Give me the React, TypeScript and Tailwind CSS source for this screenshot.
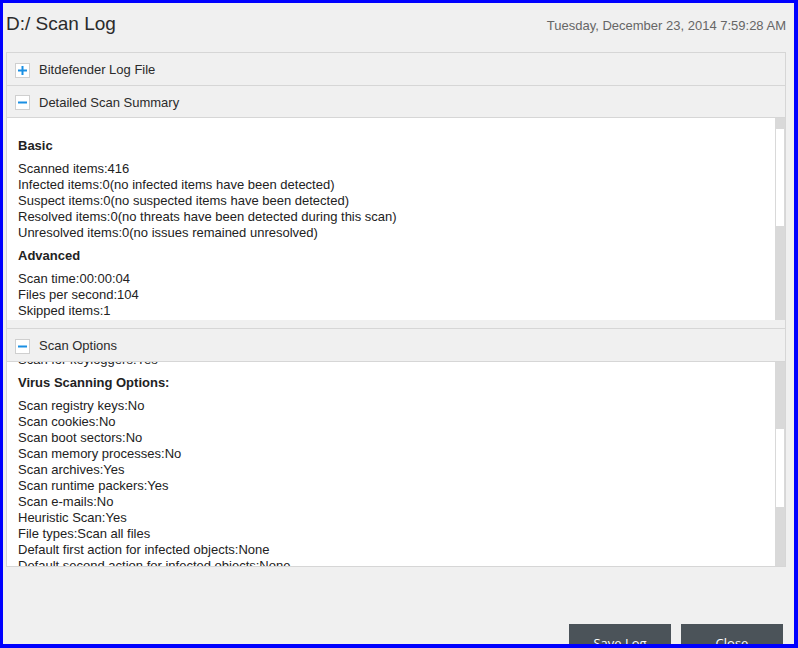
import type { ReactNode } from 'react';

const summaryBasic = [
  'Scanned items:416',
  'Infected items:0(no infected items have been detected)',
  'Suspect items:0(no suspected items have been detected)',
  'Resolved items:0(no threats have been detected during this scan)',
  'Unresolved items:0(no issues remained unresolved)',
];

const summaryAdvanced = ['Scan time:00:00:04', 'Files per second:104', 'Skipped items:1'];

const virusOptions = [
  'Scan registry keys:No',
  'Scan cookies:No',
  'Scan boot sectors:No',
  'Scan memory processes:No',
  'Scan archives:Yes',
  'Scan runtime packers:Yes',
  'Scan e-mails:No',
  'Heuristic Scan:Yes',
  'File types:Scan all files',
  'Default first action for infected objects:None',
  'Default second action for infected objects:None',
  'Default first action for suspect objects:None',
  'Default second action for suspect objects:None',
];

function ToggleBox({ open }: { open: boolean }) {
  return (
    <span className="flex h-[15px] w-[15px] shrink-0 items-center justify-center border border-[#cfcfcf] bg-white">
      <svg width="9" height="9" viewBox="0 0 9 9">
        <rect x="0" y="3.5" width="9" height="2" fill="#1a8fe3" />
        {!open && <rect x="3.5" y="0" width="2" height="9" fill="#1a8fe3" />}
      </svg>
    </span>
  );
}

function SectionHeader({ title, open, className }: { title: string; open: boolean; className: string }) {
  return (
    <div className={`flex items-center pt-[2px] pl-[8px] text-[13px] text-[#2b2b2b] ${className}`}>
      <ToggleBox open={open} />
      <span className="ml-[9px]">{title}</span>
    </div>
  );
}

function Scrollbar({ offset, thumb }: { offset: string; thumb: string }) {
  return (
    <div className={`w-[10px] shrink-0 bg-[#d9d9d9] px-[1px] ${offset}`}>
      <div className={`w-full bg-white ${thumb}`} />
    </div>
  );
}

function Heading({ children }: { children: ReactNode }) {
  return <div className="my-[7px] font-bold leading-4">{children}</div>;
}

export default function App() {
  return (
    <div className="flex h-[648px] w-[798px] flex-col overflow-hidden border-t-[3px] border-r-4 border-b-4 border-l-[3px] border-[#0000ff] bg-[#f0f0f0] font-['Liberation_Sans',Arial,sans-serif]">
      {/* Title bar */}
      <div className="flex h-[49px] shrink-0 items-baseline justify-between pt-[11px] pr-[8px] pl-[3px]">
        <h1 className="text-[19px] leading-[20px] text-[#2b2b2b]">D:/ Scan Log</h1>
        <span className="text-[13px] leading-4 text-[#666]">Tuesday, December 23, 2014 7:59:28 AM</span>
      </div>

      {/* Log panel */}
      <div className="mr-[8px] ml-[3px] flex shrink-0 flex-col border border-[#d6d6d6]">
        <SectionHeader title="Bitdefender Log File" open={false} className="h-[33px] border-b border-[#d6d6d6]" />
        <SectionHeader title="Detailed Scan Summary" open className="h-[32px] border-b border-[#d6d6d6]" />

        <div className="flex h-[202px]">
          <div className="flex-1 overflow-hidden bg-white pt-[13px] pl-[11px] text-[13px] leading-4 text-[#222]">
            <Heading>Basic</Heading>
            {summaryBasic.map((line) => (
              <div key={line}>{line}</div>
            ))}
            <Heading>Advanced</Heading>
            {summaryAdvanced.map((line) => (
              <div key={line}>{line}</div>
            ))}
          </div>
          <Scrollbar offset="pt-[11px]" thumb="h-[97px]" />
        </div>

        <div className="h-[8px]" />

        <SectionHeader title="Scan Options" open className="h-[34px] border-y border-[#d6d6d6]" />

        <div className="flex h-[204px]">
          <div className="flex-1 overflow-hidden bg-white pl-[11px] text-[13px] leading-4 text-[#222]">
            <div className="-mt-[10px]">
              <div>Scan for keyloggers:Yes</div>
              <Heading>Virus Scanning Options:</Heading>
              {virusOptions.map((line) => (
                <div key={line}>{line}</div>
              ))}
            </div>
          </div>
          <Scrollbar offset="pt-[67px]" thumb="h-[78px]" />
        </div>
      </div>

      {/* Footer buttons */}
      <div className="mt-[57px] flex shrink-0 justify-end gap-[10px] pr-[11px] font-['Open_Sans',sans-serif] text-[13px] text-white">
        <button className="h-[40px] w-[102px] bg-[#4b5359]">Save Log</button>
        <button className="h-[40px] w-[102px] bg-[#4b5359]">Close</button>
      </div>
    </div>
  );
}
